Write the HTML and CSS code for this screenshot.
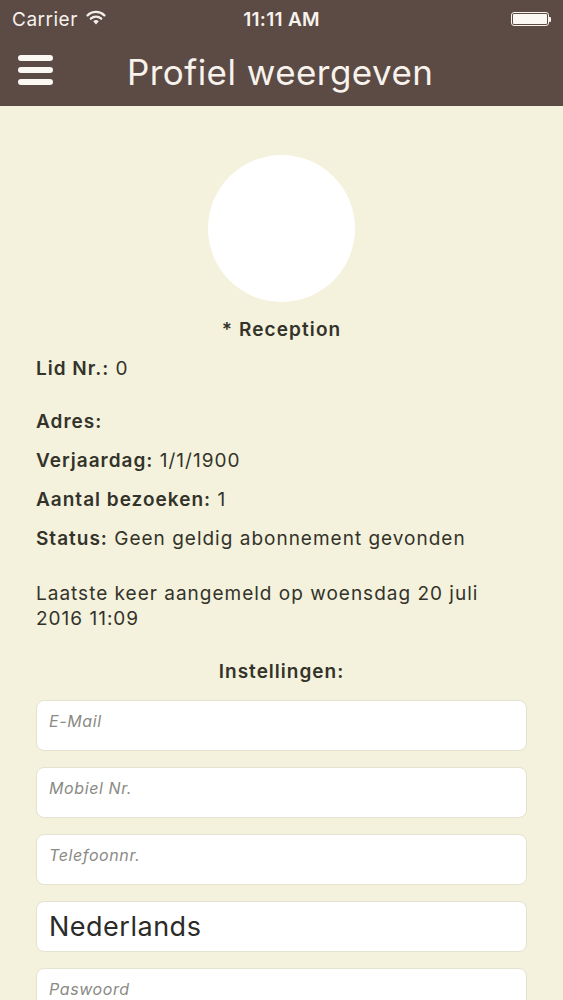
FILE: index.html
```html
<!DOCTYPE html>
<html lang="nl">
<head>
<meta charset="utf-8">
<title>Profiel weergeven</title>
<link rel="stylesheet" href="styles.css">
</head>
<body>
<header class="topbar">
  <div class="status">
    <div class="status-left">
      <span>Carrier</span>
      <svg class="wifi" width="20" height="15" viewBox="0 0 20 15">
        <path d="M10 14.5 L7.2 11.3 A4 4 0 0 1 12.8 11.3 Z" fill="#f4efe9"/>
        <path d="M4.8 8.7 A7.6 7.6 0 0 1 15.2 8.7" stroke="#f4efe9" stroke-width="2.3" fill="none" stroke-linecap="round"/>
        <path d="M1.6 5.4 A12 12 0 0 1 18.4 5.4" stroke="#f4efe9" stroke-width="2.3" fill="none" stroke-linecap="round"/>
      </svg>
    </div>
    <div class="status-time">11:11 AM</div>
    <div class="status-right">
      <div class="battery"><div class="battery-fill"></div></div>
      <div class="battery-tip"></div>
    </div>
  </div>
  <div class="navbar">
    <div class="hamburger"><span></span><span></span><span></span></div>
    <h1 class="title">Profiel weergeven</h1>
  </div>
</header>
<main class="content">
  <div class="avatar"></div>
  <div class="name">* Reception</div>
  <p class="row row-lid"><b>Lid Nr.:</b> 0</p>
  <p class="row row-adres"><b>Adres:</b></p>
  <p class="row"><b>Verjaardag:</b> 1/1/1900</p>
  <p class="row"><b>Aantal bezoeken:</b> 1</p>
  <p class="row"><b>Status:</b> Geen geldig abonnement gevonden</p>
  <p class="last">Laatste keer aangemeld op woensdag 20 juli 2016 11:09</p>
  <div class="section">Instellingen:</div>
  <div class="fields">
    <div class="field placeholder">E-Mail</div>
    <div class="field placeholder">Mobiel Nr.</div>
    <div class="field placeholder">Telefoonnr.</div>
    <div class="field value">Nederlands</div>
    <div class="field placeholder">Paswoord</div>
  </div>
</main>
</body>
</html>
```

FILE: styles.css
```css
html, body {
  margin: 0;
  padding: 0;
}
body {
  width: 563px;
  height: 1000px;
  overflow: hidden;
  background: #f4f2dc;
  font-family: Inter, "Liberation Sans", Arial, sans-serif;
  color: #33332b;
}
.topbar {
  background: #5c4a45;
  height: 106px;
  color: #f7f2ec;
}
.status {
  height: 38px;
  display: flex;
  align-items: center;
  justify-content: space-between;
  padding: 0 12px 0 12px;
}
.status-left {
  display: flex;
  align-items: center;
  gap: 8px;
  font-size: 19px;
  letter-spacing: 0.5px;
  width: 140px;
}
.wifi {
  margin-top: -3px;
}
.status-time {
  font-size: 19px;
  font-weight: 600;
  letter-spacing: 0.3px;
}
.status-right {
  width: 140px;
  display: flex;
  justify-content: flex-end;
  align-items: center;
}
.battery {
  width: 38px;
  height: 14px;
  border: 1px solid #f7f2ec;
  border-radius: 3px;
  padding: 1px;
  box-sizing: border-box;
}
.battery-fill {
  width: 100%;
  height: 100%;
  background: #fbf8f4;
  border-radius: 1px;
}
.battery-tip {
  width: 2px;
  height: 5px;
  background: #f7f2ec;
  border-radius: 0 1px 1px 0;
}
.navbar {
  height: 68px;
  display: flex;
  align-items: center;
  padding-left: 18px;
}
.hamburger {
  width: 35px;
  display: flex;
  flex-direction: column;
  gap: 6px;
  margin-top: -4px;
}
.hamburger span {
  display: block;
  height: 6px;
  border-radius: 3px;
  background: #fbf8f4;
}
.title {
  margin: -1px 0 0 74px;
  font-size: 35px;
  font-weight: 400;
  letter-spacing: 0.45px;
}
.content {
  padding: 49px 36px 0 36px;
}
.avatar {
  width: 147px;
  height: 147px;
  border-radius: 50%;
  background: #ffffff;
  margin: 0 auto;
}
.name {
  text-align: center;
  font-weight: 600;
  font-size: 19px;
  margin-top: 16px;
  line-height: 24px;
  letter-spacing: 1.1px;
}
.row {
  margin: 0;
  font-size: 19px;
  line-height: 24px;
  margin-top: 15px;
  letter-spacing: 1px;
}
.row b {
  font-weight: 600;
}
.row-adres {
  margin-top: 29px;
}
.last {
  margin: 30px 0 0 0;
  font-size: 19px;
  line-height: 25px;
  letter-spacing: 1px;
}
.section {
  text-align: center;
  font-weight: 600;
  font-size: 19px;
  line-height: 24px;
  margin-top: 29px;
  letter-spacing: 1px;
}
.fields {
  margin-top: 16px;
  display: flex;
  flex-direction: column;
  gap: 16px;
}
.field {
  height: 51px;
  box-sizing: border-box;
  background: #ffffff;
  border: 1px solid #e4e2d0;
  border-radius: 8px;
  padding: 0 12px;
}
.placeholder {
  font-style: italic;
  font-size: 16px;
  color: #8a8a85;
  padding-top: 10px;
  letter-spacing: 0.6px;
}
.value {
  font-size: 27px;
  color: #2b2b28;
  display: flex;
  align-items: center;
  letter-spacing: 0.5px;
}
```
